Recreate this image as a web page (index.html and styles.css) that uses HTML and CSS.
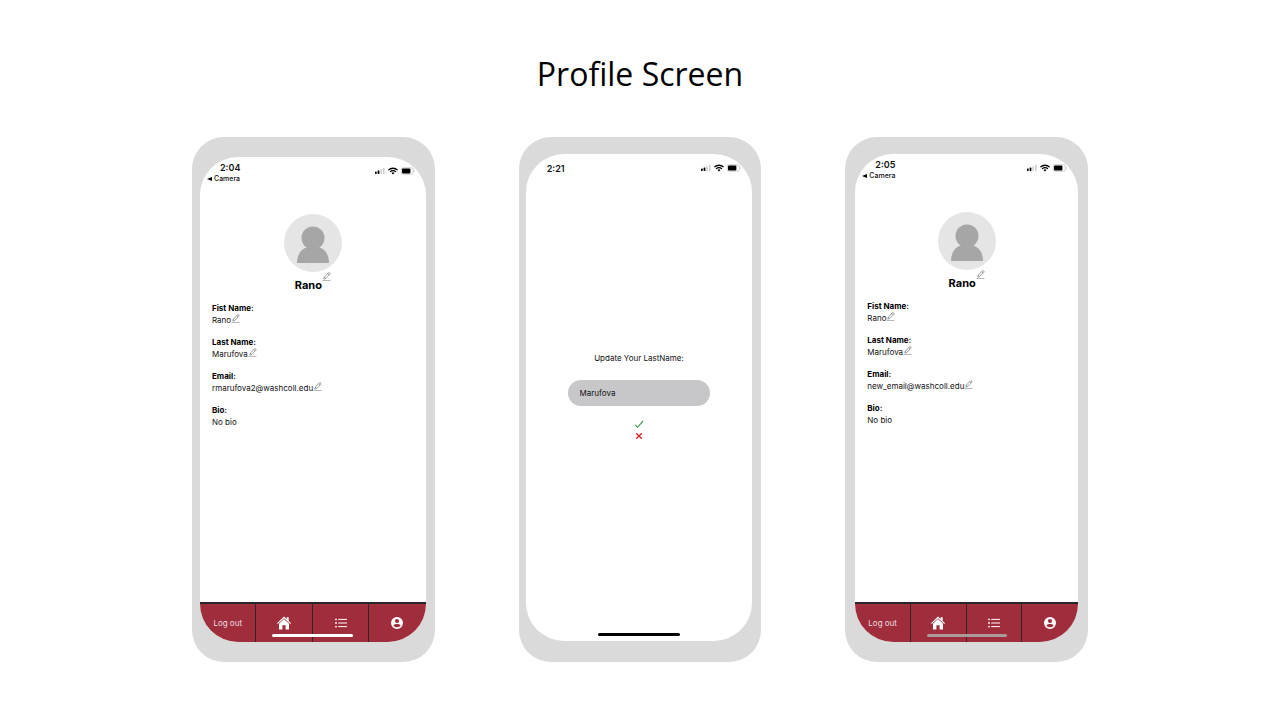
FILE: index.html
```html
<!DOCTYPE html>
<html lang="en">
<head>
<meta charset="utf-8">
<title>Profile Screen</title>
<link rel="stylesheet" href="styles.css">
</head>
<body>
<svg class="sprite" aria-hidden="true">
  <symbol id="status" viewBox="0 0 40 10">
    <rect x="0" y="5.6" width="1.7" height="2.4" rx=".4"/>
    <rect x="2.6" y="4.6" width="1.8" height="3.4" rx=".4"/>
    <rect x="5.3" y="3.2" width="1.6" height="4.8" rx=".4" fill="#d2d2d2"/>
    <rect x="8" y="1.8" width="1.6" height="6.2" rx=".4" fill="#d2d2d2"/>
    <g fill="none" stroke="#000" stroke-width="1.3">
      <path d="M13.4 4.1a6.7 6.7 0 0 1 9.2 0"/>
      <path d="M15.1 5.9a4.2 4.2 0 0 1 5.8 0"/>
    </g>
    <path d="M16.5 7a2.3 2.3 0 0 1 3 0L18 8.6z"/>
    <rect x="26.3" y="1.8" width="12" height="6.4" rx="1.8" fill="#fff" stroke="#aaa" stroke-width=".6"/>
    <rect x="27" y="2.4" width="8.4" height="5.2" rx="1"/>
    <path d="M39 4v2q1-1 0-2" fill="#999"/>
  </symbol>
  <symbol id="pencil" viewBox="0 0 9 9">
    <g fill="none" stroke="#777" stroke-width=".7" stroke-linejoin="round">
      <path d="M1.8 7.1L2.3 5.2L6.4.8Q7.2.4 7.9 1.1Q8.4 1.8 7.8 2.4L3.6 6.6zM5.6 1.6L7 3.1M2.3 5.2L3.6 6.6"/>
      <path d="M.5 8.5h8" stroke="#999"/>
    </g>
  </symbol>
  <symbol id="avatar" viewBox="0 0 58 58">
    <circle cx="29" cy="29" r="29" fill="#e5e5e5"/>
    <circle cx="29" cy="24" r="11.5" fill="#a6a6a6"/>
    <path d="M13 49C13 40 18 33.5 24.5 33.5h9C40 33.5 45 40 45 49z" fill="#a6a6a6"/>
  </symbol>
  <symbol id="home" viewBox="0 0 14 14">
    <path d="M0 7.2L7 .6l2.7 2.5V1.2h2v3.8L14 7.2l-.7.8L7 2.2.7 8z"/>
    <path d="M2 7.7L7 3.1l5 4.6V13.5H8.6V9.3H5.4v4.2H2z"/>
  </symbol>
  <symbol id="list" viewBox="0 0 12 10">
    <circle cx="1" cy="1.4" r=".9"/><circle cx="1" cy="5" r=".9"/><circle cx="1" cy="8.6" r=".9"/>
    <path d="M3.2 1.4H12M3.2 5H12M3.2 8.6H12" stroke="currentColor" stroke-width="1"/>
  </symbol>
  <symbol id="account" viewBox="0 0 12 12">
    <path fill-rule="evenodd" d="M6 0a6 6 0 1 0 0 12A6 6 0 0 0 6 0zM6 1.9a2.1 2.1 0 1 1 0 4.2 2.1 2.1 0 0 1 0-4.2zM2.4 8.4C3 7.2 4.8 6.9 6 6.9s3 .3 3.6 1.5a4.3 4.3 0 0 1-7.2 0z"/>
  </symbol>
</svg>

<main class="page">
  <h1 class="title">Profile Screen</h1>
  <div class="phones">

    <section class="phone phone-first">
      <div class="screen">
        <header class="status">
          <div class="clock"><span class="time">2:04</span><a class="back" href="#"><span class="arrow"></span>Camera</a></div>
          <svg class="status-icons"><use href="#status"/></svg>
        </header>
        <div class="profile">
          <svg class="avatar"><use href="#avatar"/></svg>
          <div class="name-row"><h2 class="name">Rano</h2><button class="edit" aria-label="Edit name"><svg><use href="#pencil"/></svg></button></div>
          <dl class="fields">
            <dt>Fist Name:</dt><dd>Rano<button class="edit" aria-label="Edit first name"><svg><use href="#pencil"/></svg></button></dd>
            <dt>Last Name:</dt><dd>Marufova<button class="edit" aria-label="Edit last name"><svg><use href="#pencil"/></svg></button></dd>
            <dt>Email:</dt><dd>rmarufova2@washcoll.edu<button class="edit" aria-label="Edit email"><svg><use href="#pencil"/></svg></button></dd>
            <dt>Bio:</dt><dd>No bio</dd>
          </dl>
        </div>
        <nav class="tabs">
          <button class="tab">Log out</button>
          <button class="tab" aria-label="Home"><svg class="icon-home"><use href="#home"/></svg></button>
          <button class="tab" aria-label="List"><svg class="icon-list"><use href="#list"/></svg></button>
          <button class="tab" aria-label="Account"><svg class="icon-account"><use href="#account"/></svg></button>
        </nav>
        <div class="indicator indicator-light"></div>
      </div>
    </section>

    <section class="phone phone-second">
      <div class="screen">
        <header class="status status-plain">
          <span class="time">2:21</span>
          <svg class="status-icons"><use href="#status"/></svg>
        </header>
        <form class="update">
          <label class="update-label" for="lastname">Update Your LastName:</label>
          <input class="update-input" id="lastname" type="text" value="Marufova">
          <button class="choice" type="button" aria-label="Save"><svg viewBox="0 0 10 10"><path d="M1 5.8L3.6 8.3L9.2 1.8" fill="none" stroke="#2f9247" stroke-width="1.1"/></svg></button>
          <button class="choice" type="button" aria-label="Cancel"><svg viewBox="0 0 10 10"><path d="M2.2 2.2l5.6 5.6M7.8 2.2L2.2 7.8" fill="none" stroke="#dc2430" stroke-width="1.4"/></svg></button>
        </form>
        <div class="indicator indicator-dark"></div>
      </div>
    </section>

    <section class="phone phone-third">
      <div class="screen">
        <header class="status">
          <div class="clock"><span class="time">2:05</span><a class="back" href="#"><span class="arrow"></span>Camera</a></div>
          <svg class="status-icons"><use href="#status"/></svg>
        </header>
        <div class="profile">
          <svg class="avatar"><use href="#avatar"/></svg>
          <div class="name-row"><h2 class="name">Rano</h2><button class="edit" aria-label="Edit name"><svg><use href="#pencil"/></svg></button></div>
          <dl class="fields">
            <dt>Fist Name:</dt><dd>Rano<button class="edit" aria-label="Edit first name"><svg><use href="#pencil"/></svg></button></dd>
            <dt>Last Name:</dt><dd>Marufova<button class="edit" aria-label="Edit last name"><svg><use href="#pencil"/></svg></button></dd>
            <dt>Email:</dt><dd>new_email@washcoll.edu<button class="edit" aria-label="Edit email"><svg><use href="#pencil"/></svg></button></dd>
            <dt>Bio:</dt><dd>No bio</dd>
          </dl>
        </div>
        <nav class="tabs">
          <button class="tab">Log out</button>
          <button class="tab" aria-label="Home"><svg class="icon-home"><use href="#home"/></svg></button>
          <button class="tab" aria-label="List"><svg class="icon-list"><use href="#list"/></svg></button>
          <button class="tab" aria-label="Account"><svg class="icon-account"><use href="#account"/></svg></button>
        </nav>
        <div class="indicator indicator-grey"></div>
      </div>
    </section>

  </div>
</main>
</body>
</html>
```

FILE: styles.css
```css
* { box-sizing: border-box; }
body {
  margin: 0;
  background: #fff;
  color: #111;
  font-family: Inter, "Liberation Sans", sans-serif;
  font-size: 8px;
}
button {
  margin: 0;
  padding: 0;
  border: 0;
  background: none;
  color: inherit;
  font: inherit;
}
svg { display: block; }
.sprite { position: absolute; width: 0; height: 0; }

.page {
  display: flex;
  flex-direction: column;
  align-items: center;
  min-height: 100vh;
  padding: 52px 0 58px;
}
.title {
  margin: 0 0 41px;
  color: #000;
  font: 400 32px/44px "Open Sans", "Noto Sans", sans-serif;
}
.phones {
  flex: 1;
  display: grid;
  grid-template-columns: repeat(3, 1fr);
  gap: 84px;
  width: 70%;
}
.phone {
  display: flex;
  border-radius: 32px;
  background: #dadada;
}
.phone-first { padding: 20px 9px 20px 8px; }
.phone-second { padding: 17px 9px 21px 7px; }
.phone-third { padding: 17px 10px 20px; }
.screen {
  position: relative;
  flex: 1;
  display: flex;
  flex-direction: column;
  overflow: hidden;
  border-radius: 38px;
  background: #fff;
}

.status {
  display: flex;
  justify-content: space-between;
  align-items: flex-start;
  padding: 5px 11px 0 7px;
}
.status-plain { padding: 9px 11px 0 21px; }
.clock { display: flex; flex-direction: column; }
.time {
  font-size: 9px;
  font-weight: 600;
  line-height: 11px;
}
.clock .time { padding-left: 13px; }
.back {
  display: flex;
  align-items: center;
  gap: 2px;
  color: inherit;
  font-size: 7px;
  font-weight: 500;
  line-height: 11px;
  text-decoration: none;
}
.arrow {
  border: 2px solid transparent;
  border-right: 5px solid #000;
  border-left: 0;
}
.status-icons { width: 40px; height: 10px; margin-top: 4px; }
.status-plain .status-icons { margin-top: 0; }

.profile { flex: 1; padding-top: 30px; }
.phone-third .profile { padding-top: 31px; }
.avatar { width: 58px; height: 58px; margin: 0 auto; }
.name-row { display: flex; justify-content: center; }
.name {
  margin: 5px 0 0;
  color: #000;
  font-size: 11px;
  font-weight: 700;
  line-height: 16px;
}
.edit { align-self: flex-start; }
.edit svg { width: 9px; height: 9px; }
.fields { margin: 9px 12px 0; }
.fields dt { color: #000; font-weight: 700; line-height: 12px; }
.fields dd {
  display: flex;
  margin: 0 0 9px;
  line-height: 13px;
}

.tabs {
  display: grid;
  grid-template-columns: repeat(4, 1fr);
  height: 40px;
  border-top: 2px solid #29262a;
  background: #9f2d3b;
  color: #fff;
}
.tab { display: grid; place-items: center; fill: currentColor; }
.tab:first-child { color: #f0dfe1; }
.tab:not(:last-child) { border-right: 1px solid #33242a; }
.icon-home { width: 14px; height: 14px; }
.icon-list { width: 12px; height: 10px; }
.icon-account { width: 12px; height: 12px; }

.indicator {
  position: absolute;
  bottom: 5px;
  left: 50%;
  width: 36%;
  height: 3px;
  margin-left: -18%;
  border-radius: 2px;
}
.indicator-light { background: #fff; }
.indicator-dark { background: #000; }
.indicator-grey { background: #aa9a9a; }

.update {
  flex: 1;
  display: flex;
  flex-direction: column;
  align-items: center;
  justify-content: center;
  padding-bottom: 21px;
}
.update-label { margin-bottom: 16px; line-height: 12px; }
.update-input {
  width: 63%;
  height: 26px;
  margin-bottom: 13px;
  padding: 0 12px;
  border: 0;
  border-radius: 13px;
  background: #c7c7c9;
  color: #111;
  font: inherit;
}
.choice { margin-bottom: 2px; }
.choice svg { width: 10px; height: 10px; }
```
